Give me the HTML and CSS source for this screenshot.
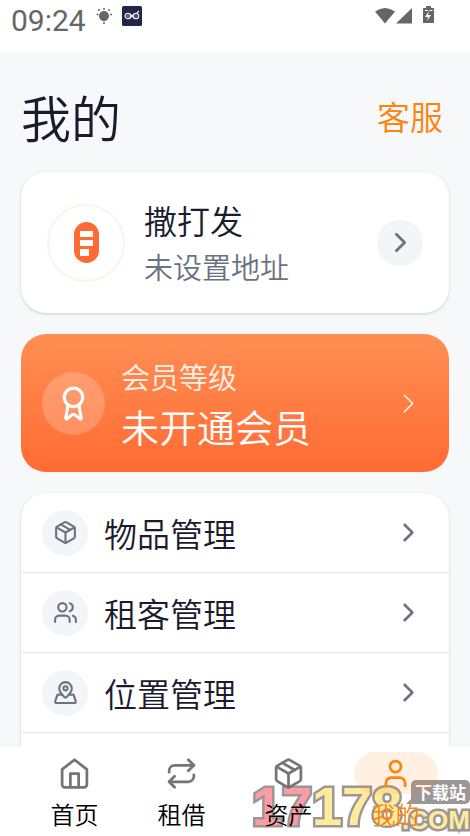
FILE: index.html
```html
<!DOCTYPE html>
<html lang="zh-CN">
<head>
<meta charset="utf-8">
<meta name="viewport" content="width=device-width, initial-scale=1">
<title>我的</title>
<link rel="stylesheet" href="styles.css">
</head>
<body>
<div class="status">
  <span class="clock">09:24</span>
  <svg class="status-bulb" width="16" height="16" viewBox="0 0 16 16" fill="#666"><circle cx="8" cy="8" r="5"/><path d="M6 11h4v2H6z"/><circle cx="1.500" cy="6.500" r="1"/><circle cx="3" cy="2" r="1"/><circle cx="8" cy="1" r="1"/><circle cx="13" cy="2" r="1"/><circle cx="15" cy="6.500" r="1"/><circle cx="8" cy="15" r="1"/></svg>
  <svg class="status-app" width="20" height="20" viewBox="0 0 20 20"><rect width="20" height="20" rx="1.500" fill="#20264a"/><g fill="none" stroke="#e4e4ea" stroke-width="1.300"><circle cx="5.800" cy="10" r="2.700"/><circle cx="14" cy="10" r="2.700"/><path d="M8 8l4 4M8 12l4-4M15 7l2-2"/></g><circle cx="5.800" cy="10" r="1" fill="#c89b3c"/><circle cx="14" cy="10" r="1" fill="#b3455f"/></svg>
  <svg class="status-system" width="59" height="20" viewBox="0 0 59 20" fill="#666"><path d="M0 5.500Q10 -1.500 20 5.500L10 17.500z"/><path d="M37 2v15.500H21z"/><path d="M49 2h2V0h5v2h2a1 1 0 0 1 1 1v14H48V3a1 1 0 0 1 1-1z"/><path d="M54 5l-4 6h3l-1 4 4-6h-3zM50 4h3v1h-3zM54.500 4h3v1h-3z" fill="#fff"/></svg>
</div>

<main class="content">
  <header class="page-head">
    <h1>我的</h1>
    <a class="service" href="#service">客服</a>
  </header>

  <a class="card profile" href="#profile">
    <span class="avatar">
      <svg width="25" height="41" viewBox="0 0 25 41"><rect width="25" height="41" rx="12.500" fill="#ff6b33"/><path d="M6 9h13v6H6zM6 18h13v6H6zM6 27h9v7H6z" fill="#fff"/></svg>
    </span>
    <span class="info">
      <span class="name">撒打发</span>
      <span class="address">未设置地址</span>
    </span>
    <span class="round">
      <svg class="icon" width="33" height="33" viewBox="0 0 24 24"><path d="m9 18 6-6-6-6"/></svg>
    </span>
  </a>

  <a class="member" href="#member">
    <span class="badge">
      <svg class="icon" width="37" height="37" viewBox="0 0 24 24"><circle cx="12" cy="8" r="6"/><path d="m15.477 12.890 1.515 8.526a.5.5 0 0 1-.81.470l-3.580-2.687a1 1 0 0 0-1.197 0l-3.586 2.686a.5.5 0 0 1-.81-.469l1.514-8.526"/></svg>
    </span>
    <span class="info">
      <span class="level">会员等级</span>
      <span class="plan">未开通会员</span>
    </span>
    <svg class="icon thin" width="33" height="33" viewBox="0 0 24 24"><path d="m9 18 6-6-6-6"/></svg>
  </a>

  <nav class="card menu">
    <a class="row" href="#items">
      <span class="round"><svg class="icon" width="25" height="25" viewBox="0 0 24 24"><path d="M11 21.730a2 2 0 0 0 2 0l7-4A2 2 0 0 0 21 16V8a2 2 0 0 0-1-1.730l-7-4a2 2 0 0 0-2 0l-7 4A2 2 0 0 0 3 8v8a2 2 0 0 0 1 1.730z"/><path d="M12 22V12"/><path d="m3.300 7 8.700 5 8.700-5"/><path d="m7.500 4.270 9 5.150"/></svg></span>
      <span class="row-label">物品管理</span>
      <svg class="icon" width="31" height="31" viewBox="0 0 24 24"><path d="m9 18 6-6-6-6"/></svg>
    </a>
    <a class="row" href="#tenants">
      <span class="round"><svg class="icon" width="25" height="25" viewBox="0 0 24 24"><path d="M16 21v-2a4 4 0 0 0-4-4H6a4 4 0 0 0-4 4v2"/><circle cx="9" cy="7" r="4"/><path d="M22 21v-2a4 4 0 0 0-3-3.870"/><path d="M16 3.130a4 4 0 0 1 0 7.750"/></svg></span>
      <span class="row-label">租客管理</span>
      <svg class="icon" width="31" height="31" viewBox="0 0 24 24"><path d="m9 18 6-6-6-6"/></svg>
    </a>
    <a class="row" href="#places">
      <span class="round"><svg class="icon" width="25" height="25" viewBox="0 0 24 24"><path d="M18 8c0 3.613-3.869 7.429-5.393 8.795a1 1 0 0 1-1.214 0C9.870 15.429 6 11.613 6 8a6 6 0 0 1 12 0"/><circle cx="12" cy="8" r="2"/><path d="M8.714 14h-3.710a1 1 0 0 0-.948.683l-2.004 6A1 1 0 0 0 3 22h18a1 1 0 0 0 .948-1.316l-2-6a1 1 0 0 0-.949-.684h-3.712"/></svg></span>
      <span class="row-label">位置管理</span>
      <svg class="icon" width="31" height="31" viewBox="0 0 24 24"><path d="m9 18 6-6-6-6"/></svg>
    </a>
  </nav>
</main>

<nav class="tabs">
  <div class="stamp">
    <span class="stamp-num"><span class="pink">17</span>178</span>
    <span class="stamp-side">
      <span class="bubble">下载站</span>
      <span class="stamp-com">.COM</span>
    </span>
  </div>
  <a class="tab" href="#home">
    <span class="pill"><svg class="icon" width="33" height="33" viewBox="0 0 24 24"><path d="m3 9 9-7 9 7v11a2 2 0 0 1-2 2H5a2 2 0 0 1-2-2z"/><path d="M9 22V12h6v10"/></svg></span>
    <span>首页</span>
  </a>
  <a class="tab" href="#rent">
    <span class="pill"><svg class="icon" width="33" height="33" viewBox="0 0 24 24"><path d="m17 2 4 4-4 4"/><path d="M3 11v-1a4 4 0 0 1 4-4h14"/><path d="m7 22-4-4 4-4"/><path d="M21 13v1a4 4 0 0 1-4 4H3"/></svg></span>
    <span>租借</span>
  </a>
  <a class="tab" href="#assets">
    <span class="pill"><svg class="icon" width="33" height="33" viewBox="0 0 24 24"><path d="M11 21.730a2 2 0 0 0 2 0l7-4A2 2 0 0 0 21 16V8a2 2 0 0 0-1-1.730l-7-4a2 2 0 0 0-2 0l-7 4A2 2 0 0 0 3 8v8a2 2 0 0 0 1 1.730z"/><path d="M12 22V12"/><path d="m3.300 7 8.700 5 8.700-5"/><path d="m7.500 4.270 9 5.150"/></svg></span>
    <span>资产</span>
  </a>
  <a class="tab active" href="#mine" aria-current="page">
    <span class="pill"><svg class="icon" width="33" height="33" viewBox="0 0 24 24"><path d="M19 21v-2a4 4 0 0 0-4-4H9a4 4 0 0 0-4 4v2"/><circle cx="12" cy="7" r="4"/></svg></span>
    <span>我的</span>
  </a>
</nav>
</body>
</html>
```
FILE: styles.css
```css
* { box-sizing: border-box; }

body {
  margin: 0;
  height: 100vh;
  display: flex;
  flex-direction: column;
  overflow: hidden;
  background: #fff;
  color: #1a1c2e;
  font-family: "Noto Sans CJK SC", sans-serif;
  font-weight: 350;
}

a { color: inherit; text-decoration: none; }
svg { display: block; flex: none; }

.icon {
  fill: none;
  stroke: currentColor;
  stroke-width: 2;
  stroke-linecap: round;
  stroke-linejoin: round;
}
.thin { stroke-width: 1; }

.status {
  flex: none;
  height: 52px;
  display: flex;
  align-items: flex-start;
  padding: 6px 36px 0 11px;
  color: #666;
}
.clock {
  font: 400 30px/30px Roboto, sans-serif;
}
.status-bulb { margin: 2px 10px 0; }
.status-system { margin-left: auto; }

.content {
  flex: 1;
  min-height: 0;
  overflow: hidden;
  display: flex;
  flex-direction: column;
  gap: 21px;
  padding: 0 21px;
  background: #f7f8fa;
}

.page-head {
  flex: none;
  display: flex;
  align-items: center;
  justify-content: space-between;
  height: 99px;
  padding: 28px 6px 0 0;
}
h1 {
  margin: 0;
  font-size: 50px;
  font-weight: 350;
  line-height: 68px;
}
.service {
  color: #ff820d;
  font-size: 33px;
  line-height: 68px;
}

.card {
  background: #fff;
  border-radius: 25px;
  box-shadow: 0 1px 3px rgba(0, 0, 0, .18);
}

.profile {
  flex: none;
  display: flex;
  align-items: center;
  gap: 19px;
  height: 141px;
  padding: 0 26px;
}
.avatar {
  display: grid;
  place-items: center;
  width: 78px;
  height: 78px;
  border: 2px solid #fff2e7;
  border-radius: 50%;
}
.info {
  flex: 1;
  display: flex;
  flex-direction: column;
}
.name { font-size: 33px; line-height: 46px; }
.address { font-size: 29px; line-height: 46px; color: #6b7280; }
.round {
  flex: none;
  display: grid;
  place-items: center;
  width: 46px;
  height: 46px;
  border-radius: 50%;
  background: #f3f5f9;
  color: #6b7280;
}

.member {
  flex: none;
  display: flex;
  align-items: center;
  gap: 16px;
  height: 138px;
  padding: 0 24px 0 21px;
  border-radius: 25px;
  background: linear-gradient(#ff8f54, #ff6b33);
  color: #fff;
}
.badge {
  display: grid;
  place-items: center;
  width: 63px;
  height: 63px;
  border-radius: 50%;
  background: rgba(255, 255, 255, .2);
}
.level { font-size: 29px; line-height: 46px; opacity: .88; }
.plan { font-size: 38px; line-height: 54px; }

.menu {
  flex: 1 0 auto;
  border-radius: 25px 25px 0 0;
}
.row {
  display: flex;
  align-items: center;
  gap: 16px;
  height: 80px;
  padding: 0 25px 0 21px;
  border-bottom: 1px solid #e2e4e9;
}
.row > .icon { color: #6b7280; }
.row-label { flex: 1; font-size: 33px; line-height: 46px; }

.tabs {
  flex: none;
  position: relative;
  display: flex;
  padding: 5px 21px 2px;
  background: #fff;
}
.tab {
  position: relative;
  flex: 1;
  display: flex;
  flex-direction: column;
  align-items: center;
  color: #000;
  font-size: 24px;
  line-height: 40px;
}
.pill {
  display: grid;
  place-items: center;
  width: 84px;
  height: 42px;
  border-radius: 21px;
  color: #757575;
}
.active, .active .pill { color: #ff820d; }
.active .pill { background: rgba(255, 130, 13, .12); }

/* site stamp behind the tab labels */
.stamp {
  position: absolute;
  right: 0;
  bottom: 0;
  display: flex;
  align-items: flex-end;
  color: #ffeb9c;
  font-family: "Liberation Sans", sans-serif;
  font-weight: 700;
  -webkit-text-stroke: 5px #9b9797;
  paint-order: stroke fill;
}
.stamp-num { font-size: 54px; line-height: 60px; }
.pink { color: #ff9ba4; }
.stamp-side { display: flex; flex-direction: column; }
.stamp-com { font-size: 26px; line-height: 32px; }
.bubble {
  position: relative;
  align-self: flex-end;
  padding: 0 4px;
  border-radius: 5px;
  background: #9b9797;
  color: #fff;
  font: 700 17px/24px "Noto Sans CJK SC", sans-serif;
  -webkit-text-stroke: 0;
}
.bubble::before {
  content: "";
  position: absolute;
  left: -5px;
  bottom: 0;
  border-left: 10px solid transparent;
  border-bottom: 10px solid #9b9797;
  border-right: 0;
}
```
